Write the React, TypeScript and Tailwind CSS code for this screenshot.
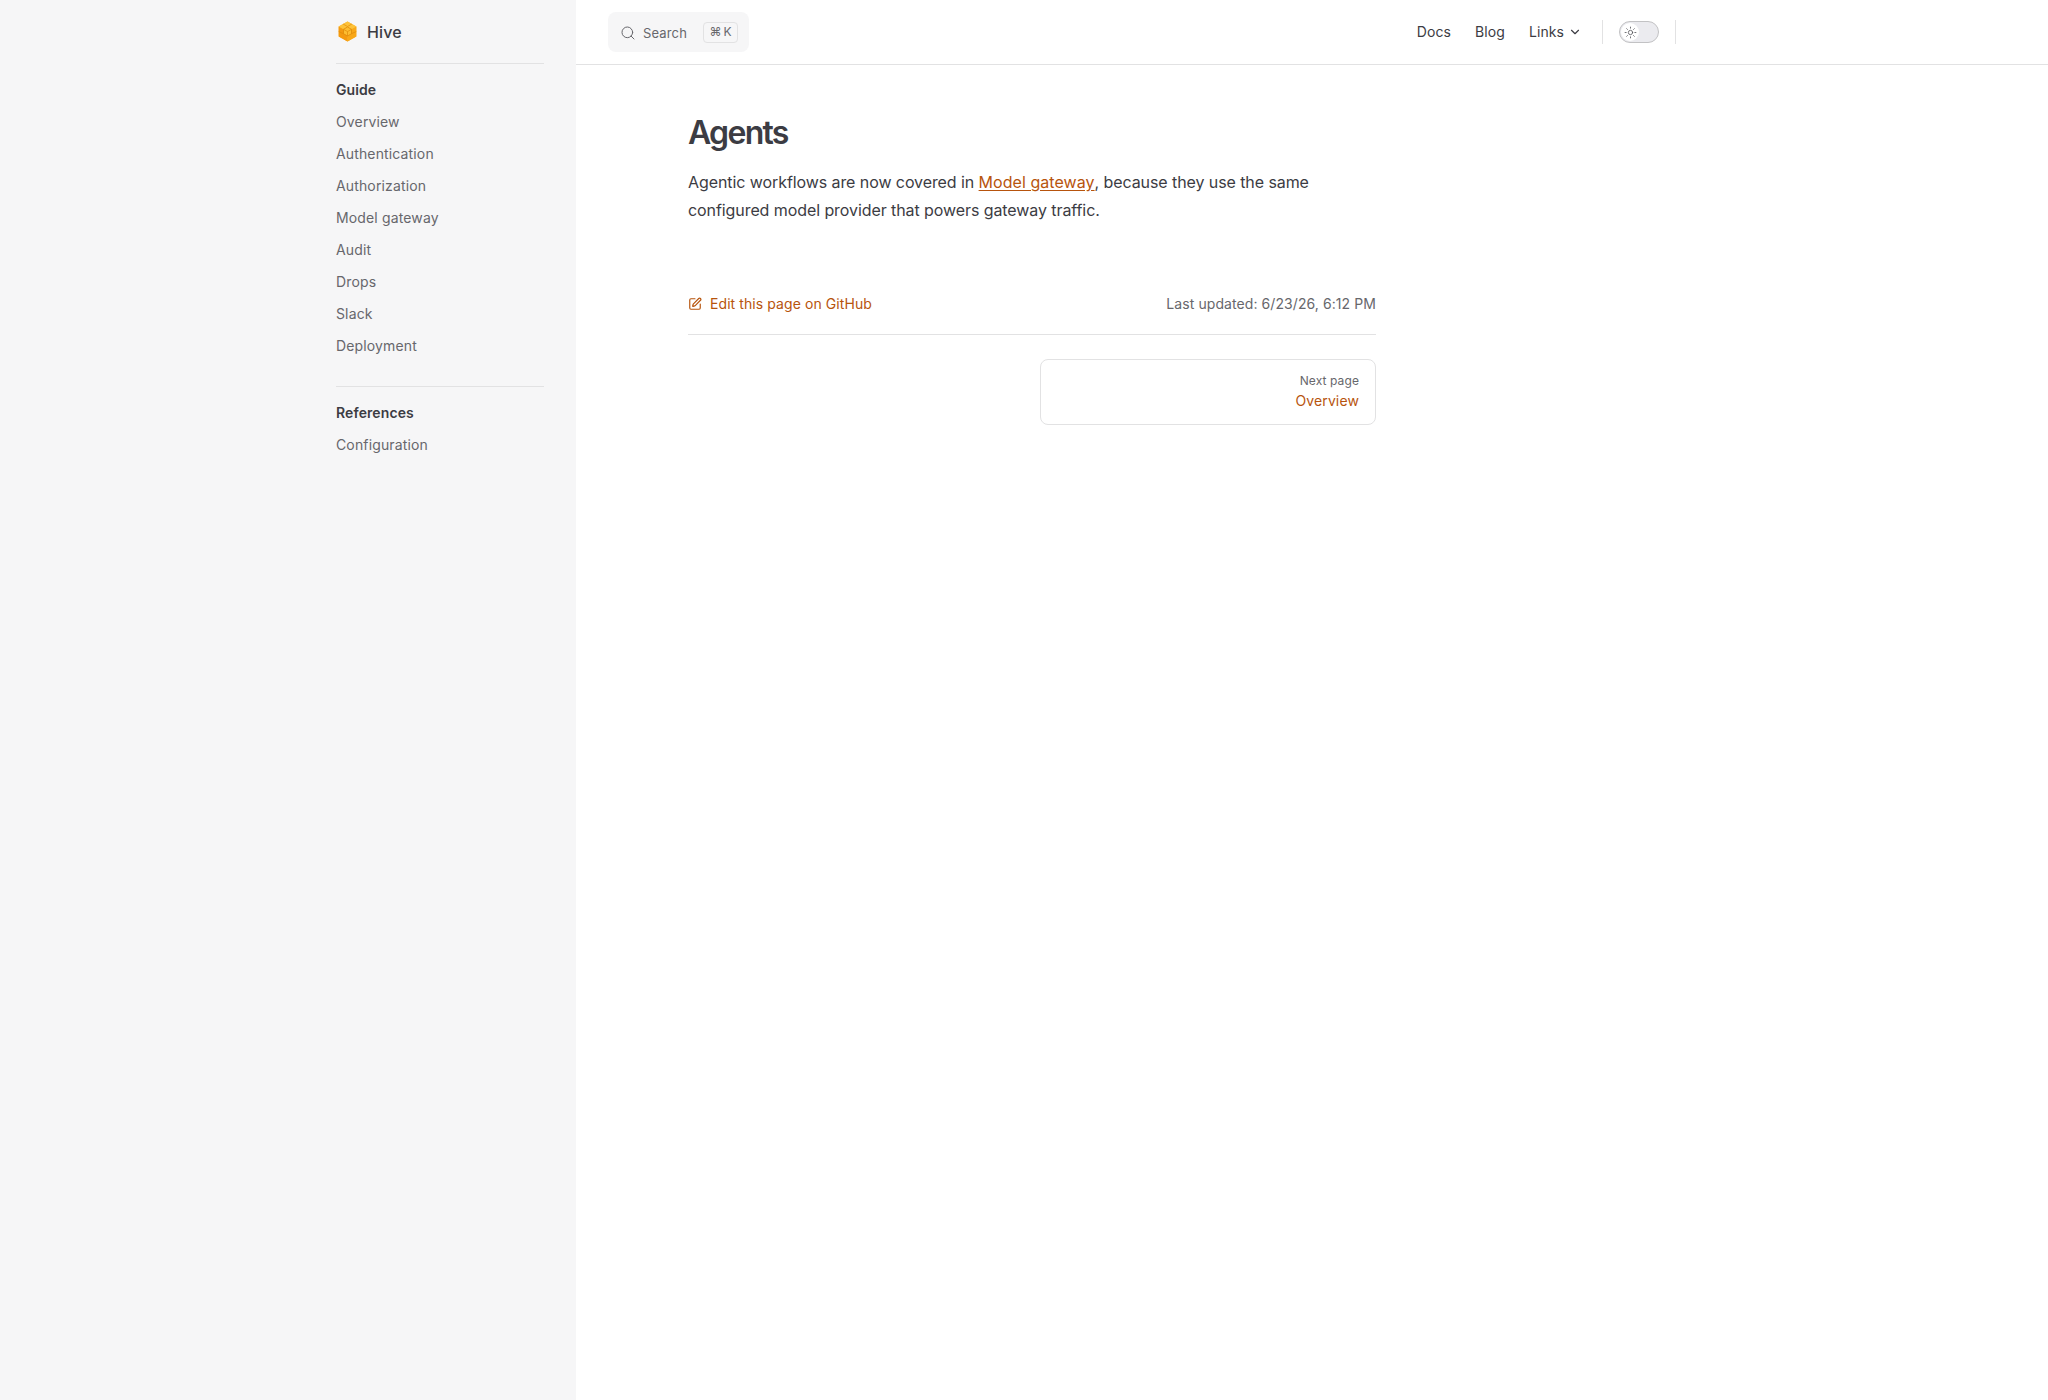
import React from "react";
import { ChevronDown, Search, SquarePen, Sun } from "lucide-react";

const guideLinks = ["Overview", "Authentication", "Authorization", "Model gateway", "Audit", "Drops", "Slack", "Deployment"];

const SidebarLink = ({ label }: { label: string }) => (
  <a className="block h-8 text-sm leading-8 font-normal tracking-[0.14px] text-[#67676c]">{label}</a>
);

const HiveLogo = () => (
  <svg viewBox="2.500 1.500 19 21" className="ml-0.5 h-[21px] w-[19px]">
    <path d="M12 2l8.800 5v10L12 22l-8.800-5V7z" fill="#fbb02a" />
    <path d="M3.200 7L12 12v10l-8.800-5z" fill="#f49a10" />
    <path d="M20.800 7L12 12v10l8.800-5z" fill="#f9a818" />
    <path d="M12 2l8.800 5L12 12 3.200 7z" fill="#fdc23a" />
    <path d="M12 7.500l4 2.300v4.400l-4 2.300-4-2.300V9.800z" fill="#fdbd30" stroke="#e08a0a" strokeWidth="0.8" />
    <path d="M8 9.800l4 2.300 4-2.300M12 12.100v4.400M7.600 4.500l4.400 2.500 4.400-2.500M3.200 12l4.800 2.200M20.800 12L16 14.200" fill="none" stroke="#e08a0a" strokeWidth="0.7" />
  </svg>
);

export default function App() {
  return (
    <div className="flex min-h-[1400px] bg-white font-['Inter',sans-serif] text-[#3c3c43]">
      <aside className="w-[576px] shrink-0 bg-[#f6f6f7] pl-[336px] pr-8">
        <div className="flex h-[64px] items-center gap-[10px] border-b border-[#e2e2e3]">
          <HiveLogo />
          <span className="text-base font-medium tracking-[0.15px]">Hive</span>
        </div>
        <nav className="border-b border-[#e2e2e3] pt-[10px] pb-6">
          <h2 className="h-8 text-sm leading-8 font-semibold tracking-[0.1px]">Guide</h2>
          {guideLinks.map((label) => (
            <SidebarLink key={label} label={label} />
          ))}
        </nav>
        <nav className="pt-[10px]">
          <h2 className="h-8 text-sm leading-8 font-semibold tracking-[0.1px]">References</h2>
          <SidebarLink label="Configuration" />
        </nav>
      </aside>

      <div className="flex-1">
        <header className="flex h-[65px] items-center justify-between border-b border-[#e2e2e3] pr-[372px] pl-8">
          <button className="flex h-10 w-[141px] items-center rounded-lg bg-[#f6f6f7] pr-[11px] pl-[12px] text-[#67676c]">
            <Search className="mt-0.5 h-4 w-4" strokeWidth={1.5} />
            <span className="mt-[3px] ml-[7px] text-[13px] font-normal tracking-[0.15px]">Search</span>
            <kbd className="ml-auto flex h-[21px] w-[35px] items-center justify-center gap-[2px] rounded border border-[#e2e2e3] font-['Inter',sans-serif] text-xs font-normal">
              <span>⌘</span>
              <span>K</span>
            </kbd>
          </button>
          <div className="flex items-center">
            <a className="text-sm font-normal tracking-[0.08px]">Docs</a>
            <a className="ml-6 text-sm font-normal tracking-[0.08px]">Blog</a>
            <a className="ml-6 flex items-center gap-1 text-sm font-normal tracking-[0.08px]">
              Links
              <ChevronDown className="h-3.5 w-3.5" strokeWidth={2} />
            </a>
            <div className="ml-5 h-6 w-px bg-[#e2e2e3]" />
            <button className="ml-4 flex h-[22px] w-10 items-center rounded-full border border-[#c2c2c4] bg-[#ebebef] px-px">
              <span className="flex h-[18px] w-[18px] items-center justify-center rounded-full bg-white">
                <Sun className="h-[13px] w-[13px] text-[#55555a]" strokeWidth={1.5} />
              </span>
            </button>
            <div className="ml-4 h-6 w-px bg-[#e2e2e3]" />
          </div>
        </header>

        <main className="ml-[112px] w-[688px] pt-[48px]">
          <h1 className="text-[32px] leading-10 font-semibold tracking-[-1.7px]">Agents</h1>
          <p className="mt-[15px] text-base leading-7 tracking-[-0.08px]">
            Agentic workflows are now covered in{" "}
            <a className="font-normal tracking-[0.05px] text-[#b7540d] underline underline-offset-2">Model gateway</a>, because they use the same
            configured model provider that powers gateway traffic.
          </p>
          <div className="mt-[70px] flex items-center justify-between border-b border-[#e2e2e3] pb-[20px] text-sm tracking-[0.08px]">
            <a className="flex items-center gap-2 font-normal text-[#b7540d]">
              <SquarePen className="h-[14px] w-[14px]" strokeWidth={2} />
              Edit this page on GitHub
            </a>
            <span className="font-normal text-[#67676c]">Last updated: 6/23/26, 6:12 PM</span>
          </div>
          <div className="mt-6 flex justify-end">
            <a className="flex h-[66px] w-[336px] flex-col items-end justify-center rounded-lg border border-[#e2e2e3] px-4 pb-0.5">
              <span className="text-xs leading-5 font-normal tracking-[0.1px] text-[#67676c]">Next page</span>
              <span className="text-sm leading-5 font-normal tracking-[0.12px] text-[#b7540d]">Overview</span>
            </a>
          </div>
        </main>
      </div>
    </div>
  );
}
